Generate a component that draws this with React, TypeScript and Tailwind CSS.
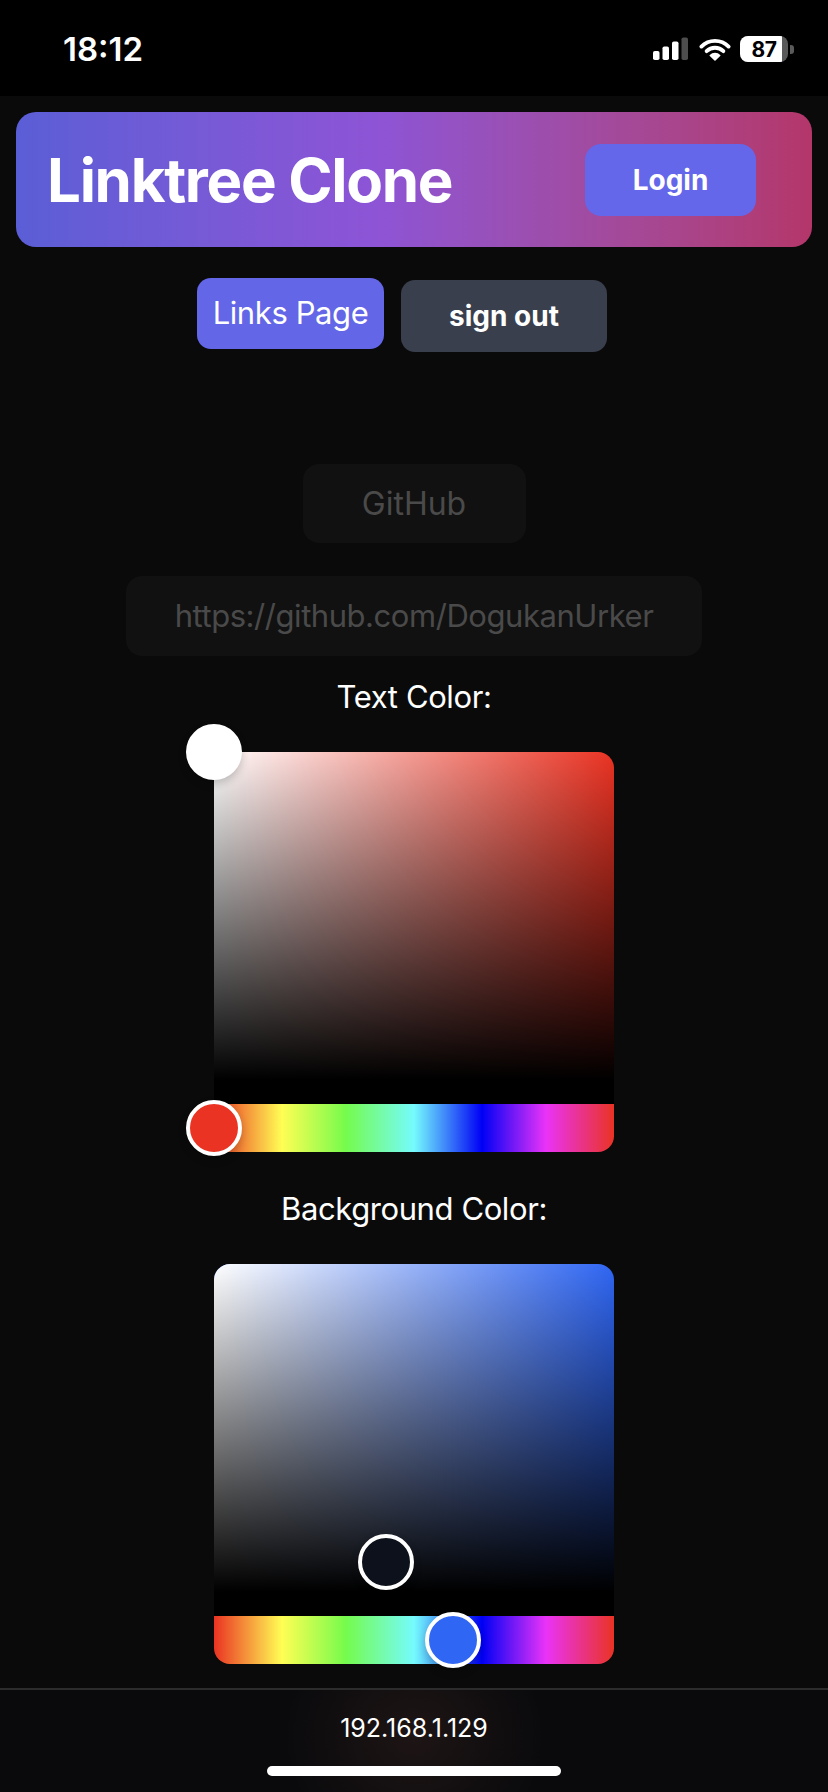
import React from "react";

function StatusBar() {
  return (
    <div className="h-[96px] bg-black flex items-start justify-between pl-[63px] pr-[34px] shrink-0">
      <div className="pt-[33px] text-[33px] leading-none font-semibold tracking-[0px] text-white">18:12</div>
      <div className="pt-[36px] flex items-center">
        <svg width="36" height="24" viewBox="0 0 36 24" className="block">
          <rect x="0" y="14" width="6.5" height="9" rx="1.8" fill="#fff" />
          <rect x="9.5" y="9.5" width="6.5" height="13.5" rx="1.8" fill="#fff" />
          <rect x="19" y="4.5" width="6.5" height="18.5" rx="1.8" fill="#fff" />
          <rect x="28.5" y="0.5" width="6.5" height="22.5" rx="1.8" fill="#4d4d4d" />
        </svg>
        <svg width="32" height="24" viewBox="0 0 32 24" className="block ml-[10px]">
          <path d="M2.4 9.6 A19 19 0 0 1 29.6 9.6" stroke="#fff" strokeWidth="3.8" fill="none" strokeLinecap="round" />
          <path d="M7.6 14.2 A12 12 0 0 1 24.4 14.2" stroke="#fff" strokeWidth="3.8" fill="none" strokeLinecap="round" />
          <path d="M16 23 L11.3 18.4 A6.5 6.5 0 0 1 20.7 18.4 Z" fill="#fff" stroke="#fff" strokeWidth="1.5" strokeLinejoin="round" />
        </svg>
        <div className="ml-[9px] flex items-center">
          <div className="relative w-[48px] h-[26px] rounded-[8px] bg-[#5a5a5a] overflow-hidden">
            <div className="absolute left-0 top-0 bottom-0 w-[87%] bg-white" />
            <div className="absolute inset-0 flex items-center justify-center text-[21px] font-bold leading-none text-black tracking-[-0.5px]">87</div>
          </div>
          <div className="ml-[2px] w-[4px] h-[9px] rounded-r-[3px] bg-[#5a5a5a]" />
        </div>
      </div>
    </div>
  );
}

function Picker({
  satBg,
  satPointer,
  satPointerBg,
  hueLeft,
  hueBg,
}: {
  satBg: string;
  satPointer: string;
  satPointerBg: string;
  hueLeft: string;
  hueBg: string;
}) {
  return (
    <div className="w-[400px] h-[400px] mx-auto flex flex-col">
      <div className={"relative flex-1 rounded-t-[16px] border-b-[24px] border-black " + satBg}>
        <div className="absolute inset-0 rounded-t-[16px] bg-linear-to-r from-white to-white/0" />
        <div className="absolute inset-0 rounded-t-[16px] bg-linear-to-t from-black to-black/0" />
        <div
          className={
            "absolute z-10 w-[56px] h-[56px] -translate-x-1/2 -translate-y-1/2 rounded-full border-4 border-white shadow-[0_4px_8px_rgba(0,0,0,0.2)] " +
            satPointer +
            " " +
            satPointerBg
          }
        />
      </div>
      <div className="relative h-[48px] rounded-b-[16px] bg-[linear-gradient(to_right,#ea3323_0%,#fffe54_17%,#75fb4c_33%,#75fbfd_50%,#0000f5_67%,#ea33f7_83%,#ea3323_100%)]">
        <div
          className={
            "absolute top-1/2 z-10 w-[56px] h-[56px] -translate-x-1/2 -translate-y-1/2 rounded-full border-4 border-white shadow-[0_4px_8px_rgba(0,0,0,0.2)] " +
            hueLeft +
            " " +
            hueBg
          }
        />
      </div>
    </div>
  );
}

export default function App() {
  return (
    <div className="w-[828px] h-[1792px] bg-[#0a0a0a] flex flex-col overflow-hidden font-[Inter,sans-serif] text-white">
      <StatusBar />
      <main className="flex flex-col px-[16px] pt-[16px] shrink-0">
        <header className="h-[135px] rounded-[20px] bg-linear-to-r from-[#5a5ed6] via-[#8d54d6] via-45% to-[#b4366a] flex items-center justify-between pl-[31px] pr-[56px]">
          <h1 className="text-[60px] font-bold leading-none tracking-[-1.3px] text-white">Linktree Clone</h1>
          <button className="w-[171px] h-[72px] rounded-[16px] bg-[#6467e9] text-[28px] font-bold text-white">
            Login
          </button>
        </header>

        <nav className="mt-[31px] flex justify-center items-start gap-[17px] pr-[24px]">
          <button className="w-[187px] h-[71px] rounded-[14px] bg-[#6366e6] text-[31px] tracking-[-0.4px] font-normal text-white">
            Links Page
          </button>
          <button className="mt-[2px] w-[206px] h-[72px] rounded-[14px] bg-[#3a3f4e] text-[28px] font-bold text-white">
            sign out
          </button>
        </nav>

        <div className="mt-[112px] mx-auto w-[223px] h-[79px] rounded-[16px] bg-[#111111] flex items-center justify-center text-[32px] text-[#4a4a4a]">
          GitHub
        </div>
        <div className="mt-[33px] mx-auto w-[576px] h-[80px] rounded-[16px] bg-[#111111] flex items-center justify-center text-[31px] tracking-[-0.45px] text-[#4a4a4a]">
          https://github.com/DogukanUrker
        </div>

        <div className="mt-[17px] text-center text-[31px] tracking-[-0.4px] leading-[48px] text-white">Text Color:</div>
        <div className="mt-[31px]">
          <Picker
            satBg="bg-[#ea3323]"
            satPointer="left-0 top-0"
            satPointerBg="bg-white"
            hueLeft="left-0"
            hueBg="bg-[#ea3323]"
          />
        </div>

        <div className="mt-[33px] text-center text-[31px] tracking-[-0.4px] leading-[48px] text-white">Background Color:</div>
        <div className="mt-[31px]">
          <Picker
            satBg="bg-[#2f66f3]"
            satPointer="left-[172px] top-[298px]"
            satPointerBg="bg-[#0d111b]"
            hueLeft="left-[239px]"
            hueBg="bg-[#2f66f3]"
          />
        </div>
      </main>

      <footer className="mt-[24px] flex-1 border-t-2 border-[#2c2c2c] bg-[radial-gradient(ellipse_130px_120px_at_50%_45%,#1e1515,#0a0a0c)] flex flex-col items-center">
        <div className="pt-[26px] text-[25px] leading-none text-white">192.168.1.129</div>
        <div className="mt-[25px] w-[294px] h-[10px] rounded-full bg-white" />
      </footer>
    </div>
  );
}
